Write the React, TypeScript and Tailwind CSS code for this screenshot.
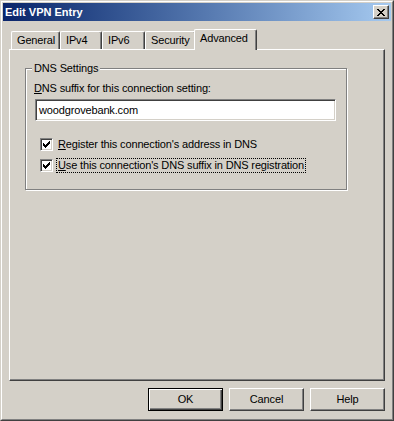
import React from 'react';

const raised =
  'border border-t-white border-l-white border-r-[#404040] border-b-[#404040] shadow-[inset_-1px_-1px_0_#808080]';
const sunken =
  'border border-t-[#808080] border-l-[#808080] border-r-white border-b-white shadow-[inset_1px_1px_0_#404040,inset_-1px_-1px_0_#D4D0C8]';

function Check() {
  // classic 7x7 check glyph, built from 3px tall columns
  const cols = [2, 3, 4, 3, 2, 1, 0];
  return (
    <svg width="7" height="7" viewBox="0 0 7 7" shapeRendering="crispEdges">
      {cols.map((y, x) => (
        <rect key={x} x={x} y={y} width="1" height="3" fill="#000" />
      ))}
    </svg>
  );
}

function Checkbox() {
  return (
    <div className={`w-[13px] h-[13px] shrink-0 bg-white flex items-center justify-center ${sunken}`}>
      <Check />
    </div>
  );
}

function Tab({ label, w, active }: { label: string; w: string; active?: boolean }) {
  if (active) {
    return (
      <div
        className={`${w} -ml-[2px] h-[21px] -mb-px relative z-10 bg-[#D4D0C8] rounded-t-[2px] border-t border-l border-r border-t-white border-l-white border-r-[#404040] shadow-[inset_-1px_0_0_#808080] pl-[5px] pt-[2px]`}
      >
        {label}
      </div>
    );
  }
  return (
    <div
      className={`${w} h-[18px] rounded-t-[2px] border-t border-l border-r border-t-white border-l-white border-r-[#404040] shadow-[inset_-1px_0_0_#808080] pl-[5px] pt-[2px]`}
    >
      {label}
    </div>
  );
}

function Button({ label, isDefault }: { label: string; isDefault?: boolean }) {
  if (isDefault) {
    return (
      <div className="w-[75px] h-[23px] border border-black shadow-[inset_1px_1px_0_#fff,inset_-1px_-1px_0_#404040,inset_-2px_-2px_0_#808080] flex items-center justify-center">
        {label}
      </div>
    );
  }
  return (
    <div className={`w-[75px] h-[23px] flex items-center justify-center ${raised}`}>
      {label}
    </div>
  );
}

export default function App() {
  return (
    <div className="w-[394px] h-[421px] bg-[#D4D0C8] text-[11px] leading-[13px] tracking-[-0.15px] text-black font-['Liberation_Sans',Arial,sans-serif] border border-t-[#D4D0C8] border-l-[#D4D0C8] border-r-[#404040] border-b-[#404040]">
      <div className="h-full border border-t-white border-l-white border-r-[#808080] border-b-[#808080] p-px flex flex-col">
        {/* title bar */}
        <div className="h-[18px] flex items-center justify-between bg-linear-to-r from-[#0A246A] to-[#A6CAF0] pl-[2px] pr-[2px]">
          <span className="text-white font-bold tracking-normal">Edit VPN Entry</span>
          <div className={`w-[16px] h-[14px] bg-[#D4D0C8] flex items-center justify-center ${raised}`}>
            <svg width="8" height="7" viewBox="0 0 8 7" shapeRendering="crispEdges">
              <path d="M0 0h2v1h-2zM6 0h2v1h-2zM1 1h2v1h-2zM5 1h2v1h-2zM2 2h4v1h-4zM3 3h2v1h-2zM2 4h4v1h-4zM1 5h2v1h-2zM5 5h2v1h-2zM0 6h2v1h-2zM6 6h2v1h-2z" fill="#000" />
            </svg>
          </div>
        </div>

        <div className="flex-1 px-[6px] pt-[8px] flex flex-col">
          {/* tabs */}
          <div className="h-[20px] flex items-end pl-[2px]">
            <Tab label="General" w="w-[49px]" />
            <Tab label="IPv4" w="w-[42px]" />
            <Tab label="IPv6" w="w-[43px]" />
            <Tab label="Security" w="w-[51px]" />
            <Tab label="Advanced" w="w-[63px]" active />
          </div>

          {/* panel */}
          <div className={`h-[332px] ${raised}`}>
            <fieldset className="ml-[15px] mt-[12px] w-[322px] h-[128px] border border-[#808080] shadow-[inset_1px_1px_0_#fff,1px_1px_0_#fff] pl-[8px]">
              <legend className="-ml-[2px] px-[2px] bg-[#D4D0C8]">DNS Settings</legend>
              <div className="pt-[7px]">
                <u>D</u>NS suffix for this connection setting:
              </div>
              <div className={`ml-px mt-[4px] w-[301px] h-[22px] bg-white flex items-center pl-[3px] ${sunken}`}>
                woodgrovebank.com
              </div>
              <div className="mt-[15px] ml-[6px] flex flex-col gap-[4px]">
                <div className="h-[17px] flex items-center gap-[3px]">
                  <Checkbox />
                  <span className="border border-transparent px-px">
                    <u>R</u>egister this connection's address in DNS
                  </span>
                </div>
                <div className="h-[17px] flex items-center gap-[3px]">
                  <Checkbox />
                  <span className="border border-dotted border-black px-px">
                    <u>U</u>se this connection's DNS suffix in DNS registration
                  </span>
                </div>
              </div>
            </fieldset>
          </div>

          {/* buttons */}
          <div className="mt-[7px] flex justify-end gap-[6px]">
            <Button label="OK" isDefault />
            <Button label="Cancel" />
            <Button label="Help" />
          </div>
        </div>
      </div>
    </div>
  );
}
